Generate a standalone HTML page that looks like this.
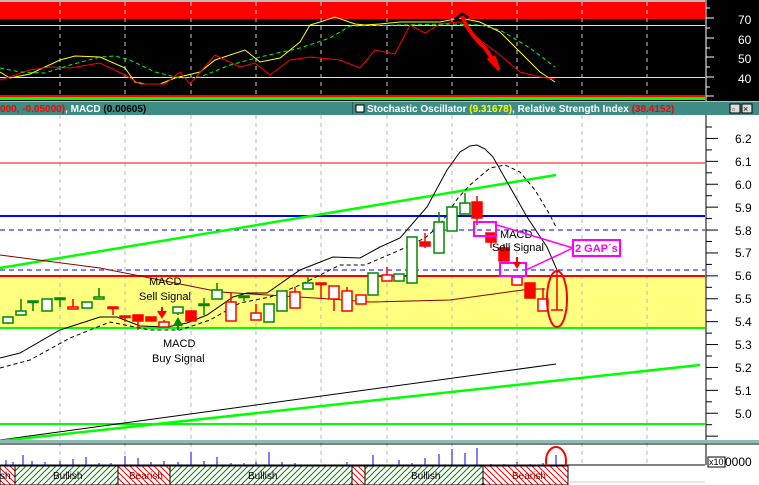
<!DOCTYPE html>
<html><head><meta charset="utf-8"><style>
html,body{margin:0;padding:0;background:#fff}
svg{display:block}
text{font-family:"Liberation Sans",sans-serif}
</style></head><body>
<svg id="s" width="759" height="485" viewBox="0 0 759 485" xmlns="http://www.w3.org/2000/svg">
<defs>
<pattern id="hg" width="6" height="6" patternUnits="userSpaceOnUse"><rect width="6" height="6" fill="#fff"/><path d="M0 6L6 0M-1 1L1 -1M5 7L7 5" stroke="#080" stroke-width="1"/></pattern>
<pattern id="hr" width="6" height="6" patternUnits="userSpaceOnUse"><rect width="6" height="6" fill="#fff"/><path d="M0 0L6 6M-1 5L1 7M5 -1L7 1" stroke="#f00" stroke-width="1"/></pattern>
</defs>
<!-- top panel -->
<rect x="0" y="0" width="759" height="101" fill="#000"/>
<rect x="0" y="0" width="705" height="2" fill="#bbb"/>
<rect x="0" y="2" width="705" height="17" fill="#f00"/>
<line x1="0" y1="25.5" x2="705" y2="25.5" stroke="#ff0"/>
<line x1="0" y1="77.5" x2="705" y2="77.5" stroke="#ff0"/>
<rect x="0" y="95" width="705" height="2" fill="#f00"/>
<rect x="0" y="97" width="705" height="3" fill="#0f0"/>
<g stroke="#ccc" stroke-dasharray="4,4"><line x1="60" y1="2" x2="60" y2="95"/><line x1="125" y1="2" x2="125" y2="95"/><line x1="191" y1="2" x2="191" y2="95"/><line x1="256" y1="2" x2="256" y2="95"/><line x1="321" y1="2" x2="321" y2="95"/><line x1="387" y1="2" x2="387" y2="95"/><line x1="452" y1="2" x2="452" y2="95"/><line x1="517" y1="2" x2="517" y2="95"/><line x1="582" y1="2" x2="582" y2="95"/><line x1="647" y1="2" x2="647" y2="95"/></g>
<line x1="706" y1="0" x2="706" y2="101" stroke="#fff"/>
<g stroke="#fff"><line x1="706" y1="8" x2="710" y2="8"/><line x1="706" y1="18" x2="714" y2="18"/><line x1="706" y1="28" x2="710" y2="28"/><line x1="706" y1="38" x2="714" y2="38"/><line x1="706" y1="48" x2="710" y2="48"/><line x1="706" y1="57" x2="714" y2="57"/><line x1="706" y1="67" x2="710" y2="67"/><line x1="706" y1="77" x2="714" y2="77"/><line x1="706" y1="87" x2="710" y2="87"/><line x1="706" y1="96" x2="714" y2="96"/></g>
<g fill="#fff" font-size="12"><text x="738" y="24">70</text><text x="738" y="44">60</text><text x="738" y="63">50</text><text x="738" y="83">40</text></g>
<polyline fill="none" stroke="#ff0" points="0,72 10,78 30,74 60,60 75,56 100,57 125,68 135,82 145,84 160,84 175,78 200,72 215,60 245,50 260,62 280,58 300,42 310,25 320,22 335,17 355,24 365,25 380,24 400,22 440,22 460,18 480,22 500,32 520,52 540,72 555,82"/>
<polyline fill="none" stroke="#f00" points="0,80 30,70 50,67 70,68 100,63 125,75 140,84 165,84 180,72 190,84 215,55 240,67 255,63 270,75 290,60 310,57 340,60 360,68 375,50 395,54 410,25 425,33 440,24 460,22 480,40 500,55 520,72 540,77 555,79"/>
<polyline fill="none" stroke="#0f0" stroke-dasharray="4,3" points="0,68 20,72 45,73 70,65 100,57 115,56 130,60 155,72 180,78 200,77 230,65 260,57 300,48 330,38 350,26 400,25 450,24 480,25 500,30 530,48 555,67"/>
<path d="M455 20 L462 14 L468 18" stroke="#000" stroke-width="3" fill="none"/>
<path d="M462 16 Q470 35 485 48 L497 66" stroke="#f00" stroke-width="4" fill="none"/>
<path d="M488 58 L499 70 L494 56" stroke="#f00" stroke-width="3" fill="none"/>
<!-- title bar -->
<rect x="0" y="101" width="759" height="14" fill="#3f8c84"/>
<rect x="0" y="101" width="759" height="1" fill="#8cc"/>
<rect x="352" y="102" width="1" height="12" fill="#2a5e58"/>
<text x="0" y="112" font-size="10" font-weight="bold" fill="#fff"><tspan fill="#f00">000, -0.05000)</tspan>, MACD <tspan fill="#000">(0.00605)</tspan></text>
<rect x="356" y="105" width="8" height="7" fill="#fff" stroke="#000"/>
<text x="367" y="112" font-size="10" font-weight="bold" fill="#fff">Stochastic Oscillator <tspan fill="#ff0">(9.31678)</tspan>, Relative Strength Index <tspan fill="#f00">(38.4152)</tspan></text>
<rect x="730" y="104" width="10" height="9" fill="#ddd" stroke="#000"/><rect x="742" y="104" width="10" height="9" fill="#ddd" stroke="#000"/>
<text x="743" y="112" font-size="9" fill="#000">×</text><text x="732" y="112" font-size="8" fill="#000">▫</text>
<!-- main chart -->
<rect x="0" y="115" width="705" height="325" fill="#fff"/>
<rect x="0" y="277" width="705" height="51" fill="#ffff80"/>
<g stroke="#bbb" stroke-dasharray="4,4"><line x1="60" y1="115" x2="60" y2="465"/><line x1="125" y1="115" x2="125" y2="465"/><line x1="191" y1="115" x2="191" y2="465"/><line x1="256" y1="115" x2="256" y2="465"/><line x1="321" y1="115" x2="321" y2="465"/><line x1="387" y1="115" x2="387" y2="465"/><line x1="452" y1="115" x2="452" y2="465"/><line x1="517" y1="115" x2="517" y2="465"/><line x1="582" y1="115" x2="582" y2="465"/><line x1="647" y1="115" x2="647" y2="465"/></g>
<line x1="0" y1="163" x2="705" y2="163" stroke="#f00"/>
<line x1="0" y1="216" x2="705" y2="216" stroke="#00f" stroke-width="2"/>
<line x1="0" y1="230" x2="705" y2="230" stroke="#00f" stroke-dasharray="5,4"/>
<line x1="0" y1="270" x2="705" y2="270" stroke="#00f" stroke-dasharray="5,4"/>
<line x1="0" y1="276" x2="705" y2="276" stroke="#f00" stroke-width="2"/>
<line x1="0" y1="328" x2="705" y2="328" stroke="#0f0" stroke-width="2"/>
<line x1="0" y1="424" x2="705" y2="424" stroke="#0f0" stroke-width="2"/>
<line x1="0" y1="268" x2="556" y2="175" stroke="#0f0" stroke-width="2.5"/>
<line x1="0" y1="440" x2="556" y2="364" stroke="#000"/>
<line x1="0" y1="441" x2="700" y2="365" stroke="#0f0" stroke-width="2.5"/>
<polyline fill="none" stroke="#800" points="0,255 100,268 220,292 330,299 370,302 450,300 530,289 545,289"/>
<polyline fill="none" stroke="#000" points="0,358 20,353 60,330 100,317 117,317 140,326 167,327 187,323 207,315 233,297 247,293 267,293 300,270 333,257 360,258 380,247 400,238 427,207 447,170 460,152 470,146 477,145 485,149 493,157 510,187 527,217 547,247 557,270"/>
<polyline fill="none" stroke="#000" stroke-dasharray="4,3" points="0,368 30,360 70,338 110,322 150,330 180,330 210,320 240,303 270,297 300,285 340,265 365,265 400,250 425,238 440,225 458,198 470,185 490,168 505,165 520,172 535,190 550,215 556,227"/>
<g id="candles"></g>
<!-- annotations -->
<path d="M162 307 V315 M158 311 L162 317 L166 311" stroke="#f00" stroke-width="2" fill="#f00"/>
<path d="M178 330 V322 M174 326 L178 319 L182 326" stroke="#080" stroke-width="2" fill="#080"/>
<g font-size="11" fill="#000"><text x="149" y="285">MACD</text><text x="139" y="300">Sell Signal</text><text x="163" y="347">MACD</text><text x="152" y="362">Buy Signal</text><text x="500" y="238">MACD</text><text x="492" y="251">Sell Signal</text></g>
<rect x="474" y="222" width="22" height="14" fill="none" stroke="#f0f" stroke-width="2"/>
<rect x="500" y="263" width="26" height="13" fill="none" stroke="#f0f" stroke-width="2"/>
<path d="M497 225 L573 248 M526 270 L573 248" stroke="#f0f" stroke-width="1.5"/>
<path d="M517 257 V265 M514 262 L517 267 L520 262" stroke="#f00" stroke-width="2"/>
<rect x="573" y="240" width="47" height="16" fill="#fff" stroke="#f0f" stroke-width="2"/>
<text x="575" y="252" font-size="11" font-weight="bold" fill="#f0f">2 GAP´s</text>
<ellipse cx="557" cy="299" rx="10" ry="28" fill="none" stroke="#f00" stroke-width="2"/>
<!-- price axis -->
<rect x="705" y="115" width="54" height="325" fill="#fff"/>
<line x1="706" y1="115" x2="706" y2="440" stroke="#000"/>
<g id="ticks" stroke="#000"></g>
<g font-size="12" fill="#000"><text x="735" y="143">6.2</text><text x="735" y="166">6.1</text><text x="735" y="189">6.0</text><text x="735" y="212">5.9</text><text x="735" y="235">5.8</text><text x="735" y="257">5.7</text><text x="735" y="280">5.6</text><text x="735" y="303">5.5</text><text x="735" y="326">5.4</text><text x="735" y="349">5.3</text><text x="735" y="372">5.2</text><text x="735" y="395">5.1</text><text x="735" y="418">5.0</text></g>
<!-- volume -->
<rect x="0" y="440" width="759" height="3" fill="#8cbcb4"/>
<line x1="0" y1="444" x2="759" y2="444" stroke="#000"/>
<line x1="0" y1="465" x2="705" y2="465" stroke="#000"/>
<line x1="706" y1="444" x2="706" y2="465" stroke="#000"/>
<g id="vol" stroke="#00f"></g>
<rect x="708" y="457" width="17" height="10" fill="#fff" stroke="#000"/>
<text x="709" y="465" font-size="9">x10</text><text x="725" y="466" font-size="12">0000</text>
<ellipse cx="556" cy="461" rx="10" ry="14" fill="none" stroke="#f00" stroke-width="2"/>
<!-- trend band -->
<rect x="0" y="466" width="15" height="19" fill="url(#hr)" stroke="#000"/>
<rect x="15" y="466" width="103" height="19" fill="url(#hg)" stroke="#000"/>
<rect x="118" y="466" width="52" height="19" fill="url(#hr)" stroke="#000"/>
<rect x="170" y="466" width="182" height="19" fill="url(#hg)" stroke="#000"/>
<rect x="352" y="466" width="13" height="19" fill="url(#hr)" stroke="#000"/>
<rect x="365" y="466" width="118" height="19" fill="url(#hg)" stroke="#000"/>
<rect x="483" y="466" width="85" height="19" fill="url(#hr)" stroke="#000"/>
<line x1="568" y1="482" x2="705" y2="482" stroke="#ccc"/>
<g font-size="10"><text x="0" y="479" fill="#000">sh</text><text x="53" y="479">Bullish</text><text x="129" y="479" fill="#800">Bearish</text><text x="248" y="479">Bullish</text><text x="411" y="479">Bullish</text><text x="512" y="479" fill="#800">Bearish</text></g>
</svg>
<script>
var NS="http://www.w3.org/2000/svg",g=document.getElementById('candles');
function el(t,a,p){var e=document.createElementNS(NS,t);for(var k in a)e.setAttribute(k,a[k]);(p||g).appendChild(e);}
var C=[[8,316,324,317,323,'g',0],[21,299,315,311,315,'g',0],[33,301,311,301,302,'g',1],[47,299,311,299,311,'g',0],[60,298,307,298,299,'g',1],[73,299,308,307,309,'r',0],[87,302,308,302,308,'g',0],[99,288,299,297,299,'g',0],[113,307,315,307,308,'r',1],[125,316,322,316,317,'r',1],[138,315,330,315,321,'r',1],[151,317,321,317,321,'r',1],[164,320,327,322,327,'r',0],[178,307,315,307,313,'g',0],[191,311,321,311,321,'r',1],[204,298,315,304,305,'g',1],[217,283,299,290,299,'g',0],[231,293,321,302,321,'r',0],[244,296,301,296,297,'g',1],[256,304,320,313,320,'r',0],[269,304,322,304,322,'g',0],[282,291,311,291,311,'g',0],[295,287,308,292,308,'r',0],[308,276,289,283,289,'g',0],[321,283,299,283,284,'r',1],[334,286,311,286,299,'r',0],[347,287,311,291,311,'r',0],[361,295,304,295,304,'r',0],[373,273,295,273,295,'g',0],[387,267,281,275,281,'r',0],[399,274,281,274,281,'g',0],[412,237,283,237,283,'g',0],[425,233,248,242,246,'r',1],[439,212,253,222,253,'g',0],[452,207,231,207,231,'g',0],[465,193,214,203,214,'g',0],[477,196,225,202,218,'r',1],[491,233,248,233,242,'r',1],[504,244,261,248,261,'r',1],[517,277,285,277,285,'r',0],[530,283,298,283,298,'r',1],[543,288,311,299,311,'r',0]];
C.forEach(function(c){var col=c[5]=='g'?'#080':'#f00';
el('line',{x1:c[0],y1:c[1],x2:c[0],y2:c[2],stroke:col,'stroke-width':1.5});
var h=Math.max(c[4]-c[3],1.5);
el('rect',{x:c[0]-5,y:c[3],width:10,height:h,fill:c[6]?col:'#fff',stroke:col,'stroke-width':1.5});});
el('line',{x1:557,y1:270,x2:557,y2:310,stroke:'#f00','stroke-width':1.5});
el('line',{x1:551,y1:310,x2:563,y2:310,stroke:'#f00','stroke-width':1.5});
var t=document.getElementById('ticks');
for(var y=127;y<440;y+=11.45){var big=Math.abs(((y-139)/22.9)-Math.round((y-139)/22.9))<0.1;el('line',{x1:706,y1:y,x2:big?718:712,y2:y},t);}
var v=document.getElementById('vol');
[[6,460],[13,462],[23,455],[32,461],[45,462],[60,461],[73,459],[86,457],[99,463],[111,463],[125,456],[138,458],[151,462],[164,461],[178,462],[191,452],[204,461],[217,457],[231,463],[244,463],[256,462],[269,452],[282,462],[295,463],[347,462],[373,455],[399,460],[412,463],[425,458],[439,454],[452,449],[465,453],[477,448],[491,464],[504,464],[517,462],[530,464],[543,463],[556,455]].forEach(function(b){el('line',{x1:b[0],y1:b[1],x2:b[0],y2:465},v);});
</script>
</body></html>
